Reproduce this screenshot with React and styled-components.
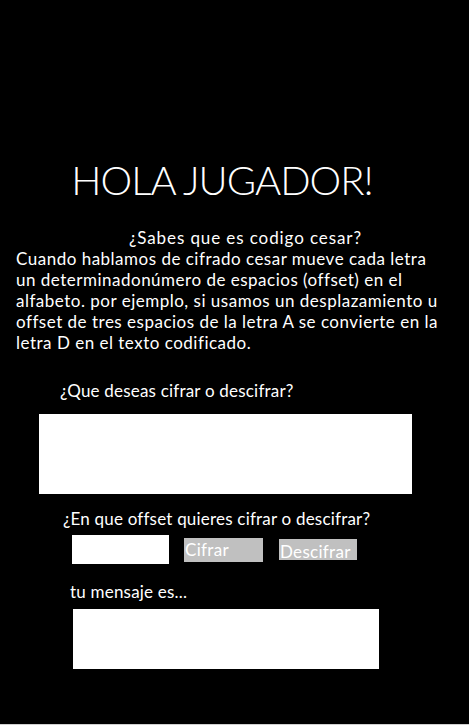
import React from 'react';
import styled, { createGlobalStyle } from 'styled-components';

const GlobalStyle = createGlobalStyle`
  html, body {
    margin: 0;
    padding: 0;
    background: #d0d0d0;
  }
  body {
    font-family: Lato, "Liberation Sans", sans-serif;
  }
`;

const Page = styled.main`
  background: #000;
  color: #fff;
  min-height: 724px;
  padding-top: 156px;
  box-sizing: border-box;
  display: flex;
  flex-direction: column;
`;

const Title = styled.h1`
  margin: 0;
  padding-right: 25px;
  text-align: center;
  font-size: 40px;
  line-height: 48px;
  font-weight: 300;
  letter-spacing: -1px;
`;

const Intro = styled.section`
  margin-top: 23px;
  padding-left: 16px;
  font-size: 17px;
  line-height: 21px;
  letter-spacing: 0.5px;
`;

const Question = styled.p`
  margin: 0;
  padding-left: 7px;
  text-align: center;
  width: 445px;
  letter-spacing: 0.9px;
`;

const Explanation = styled.p`
  margin: 0;
  white-space: nowrap;
`;

const Label = styled.label`
  display: block;
  margin: ${(p) => p.top}px 0 0 ${(p) => p.left}px;
  font-size: 17px;
  line-height: 21px;
  letter-spacing: 0.2px;
`;

const TextBox = styled.textarea`
  display: block;
  box-sizing: border-box;
  margin: ${(p) => p.top}px 0 0 ${(p) => p.left}px;
  width: ${(p) => p.w}px;
  height: ${(p) => p.h}px;
  border: none;
  background: #fff;
  resize: none;
  padding: 0;
  outline: none;
`;

const Controls = styled.div`
  display: flex;
  align-items: center;
  margin: 6px 0 0 72px;
`;

const OffsetInput = styled.input`
  box-sizing: border-box;
  width: 97px;
  height: 29px;
  border: none;
  background: #fff;
  padding: 0;
  outline: none;
`;

const ActionButton = styled.button`
  box-sizing: border-box;
  margin-left: ${(p) => p.gap}px;
  width: ${(p) => p.w}px;
  height: ${(p) => p.h}px;
  border: none;
  background: #c0c0c0;
  color: #fff;
  font-family: Lato, "Liberation Sans", sans-serif;
  font-size: 17px;
  line-height: 17px;
  letter-spacing: 0.3px;
  text-align: left;
  padding: ${(p) => p.pt}px 0 0 1px;
  display: flex;
  align-items: flex-start;
`;

export default function App() {
  return (
    <>
      <GlobalStyle />
      <Page>
        <Title>HOLA JUGADOR!</Title>
        <Intro>
          <Question>¿Sabes que es codigo cesar?</Question>
          <Explanation>
            Cuando hablamos de cifrado cesar mueve cada letra
            <br />
            un determinadonúmero de espacios (offset) en el
            <br />
            alfabeto. por ejemplo, si usamos un desplazamiento u
            <br />
            offset de tres espacios de la letra A se convierte en la
            <br />
            letra D en el texto codificado.
          </Explanation>
        </Intro>
        <Label top={27} left={60}>¿Que deseas cifrar o descifrar?</Label>
        <TextBox top={13} left={39} w={373} h={80} />
        <Label top={14} left={63}>¿En que offset quieres cifrar o descifrar?</Label>
        <Controls>
          <OffsetInput type="text" />
          <ActionButton gap={15} w={79} h={24} pt={3}>Cifrar</ActionButton>
          <ActionButton gap={16} w={78} h={21} pt={4}>Descifrar</ActionButton>
        </Controls>
        <Label top={17} left={70}>tu mensaje es...</Label>
        <TextBox top={7} left={73} w={306} h={60} readOnly />
      </Page>
    </>
  );
}
